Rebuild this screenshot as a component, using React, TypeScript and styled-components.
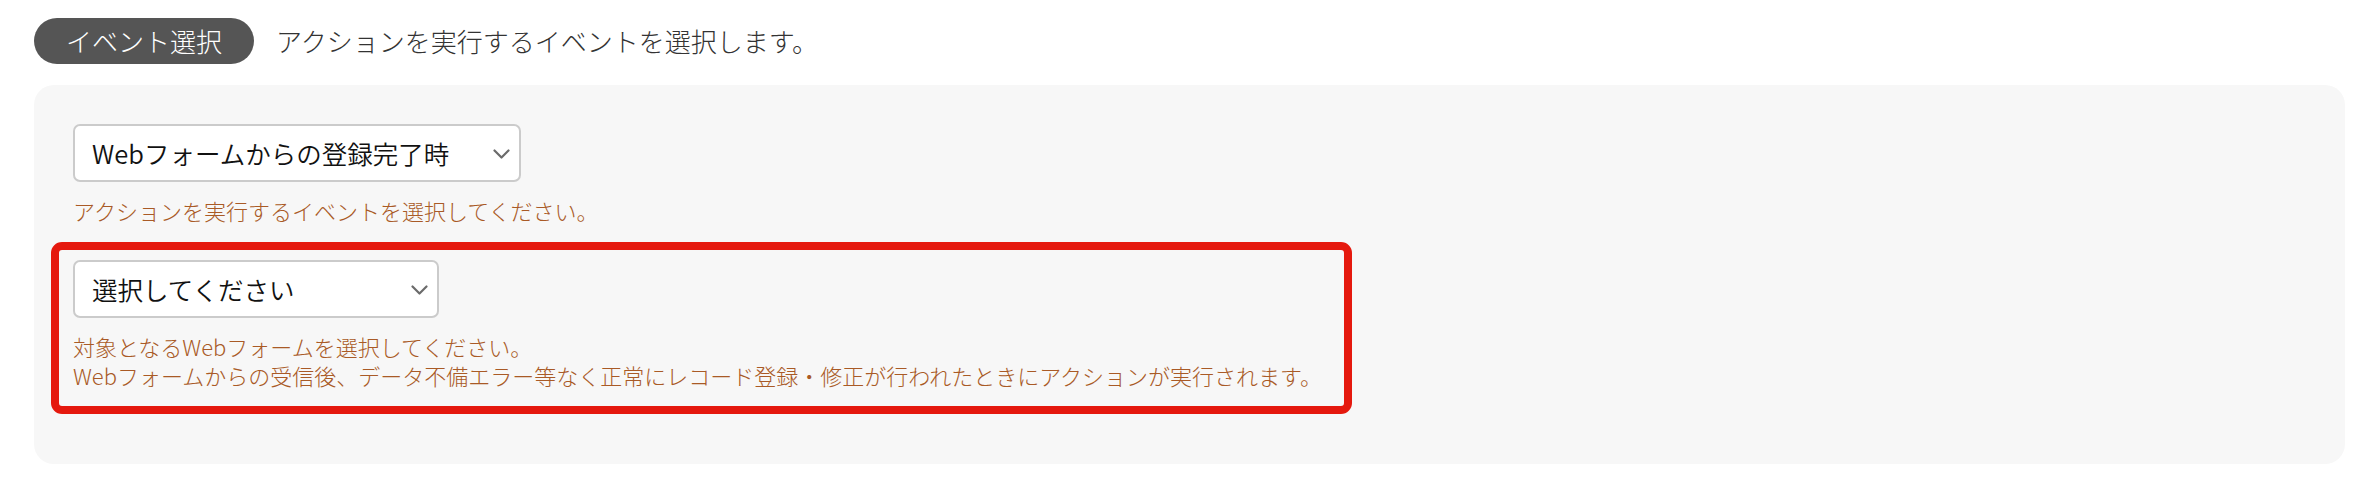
import React from "react";
import styled, { createGlobalStyle } from "styled-components";

const GlobalStyle = createGlobalStyle`
  html,
  body {
    margin: 0;
    background: #fff;
  }

  body {
    font-family: "Noto Sans CJK JP", "Noto Sans", sans-serif;
    color: #333;
  }

  * {
    box-sizing: border-box;
  }
`;

const Page = styled.div`
  padding: 18px 33px 0 34px;
`;

const Header = styled.div`
  display: flex;
  align-items: center;
  gap: 22px;
`;

const Pill = styled.span`
  display: inline-flex;
  align-items: center;
  height: 46px;
  padding: 0 32px;
  border-radius: 23px;
  background: #555;
  color: #fff;
  font-size: 26px;
  font-weight: 300;
  line-height: 1;
`;

const Lead = styled.p`
  margin: 0;
  font-size: 26px;
  font-weight: 300;
  line-height: 1;
  color: #333;
`;

const Panel = styled.section`
  margin-top: 21px;
  padding: 39px 39px 50px;
  border-radius: 20px;
  background: #f7f7f7;
`;

const Field = styled.div`
  display: flex;
  flex-direction: column;
  align-items: flex-start;
`;

const Highlight = styled.div`
  width: 1301px;
  margin: 17px 0 0 -22px;
  padding: 10px 14px 16px;
  border: 8px solid #e5190e;
  border-radius: 11px;
`;

const SelectBox = styled.div<{ width: number }>`
  display: flex;
  align-items: center;
  justify-content: space-between;
  width: ${({ width }) => width}px;
  height: 58px;
  padding: 0 9px 0 17px;
  border: 2px solid #cbcbcb;
  border-radius: 7px;
  background: #fff;
  color: #111;
  font-size: 25.5px;
  font-weight: 350;
  line-height: 1;
  cursor: pointer;
`;

const Chevron = styled.svg`
  flex-shrink: 0;
  margin-top: 2px;
`;

const Hint = styled.p`
  margin: 14px 0 0;
  font-size: 22px;
  font-weight: 300;
  line-height: 29px;
  color: #a95a26;
`;

const ChevronIcon = () => (
  <Chevron width="17" height="10" viewBox="0 0 17 10">
    <polyline
      points="1.5,1.5 8.5,8.5 15.5,1.5"
      fill="none"
      stroke="#6b6b6b"
      strokeWidth="2.2"
      strokeLinecap="round"
      strokeLinejoin="round"
    />
  </Chevron>
);

type SelectProps = {
  label: string;
  width: number;
};

const Select: React.FC<SelectProps> = ({ label, width }) => (
  <SelectBox width={width}>
    <span>{label}</span>
    <ChevronIcon />
  </SelectBox>
);

const App: React.FC = () => {
  return (
    <>
      <GlobalStyle />
      <Page>
        <Header>
          <Pill>イベント選択</Pill>
          <Lead>アクションを実行するイベントを選択します。</Lead>
        </Header>
        <Panel>
          <Field>
            <Select label="Webフォームからの登録完了時" width={448} />
            <Hint>アクションを実行するイベントを選択してください。</Hint>
          </Field>
          <Highlight>
            <Field>
              <Select label="選択してください" width={366} />
              <Hint>
                対象となるWebフォームを選択してください。
                <br />
                Webフォームからの受信後、データ不備エラー等なく正常にレコード登録・修正が行われたときにアクションが実行されます。
              </Hint>
            </Field>
          </Highlight>
        </Panel>
      </Page>
    </>
  );
};

export default App;
